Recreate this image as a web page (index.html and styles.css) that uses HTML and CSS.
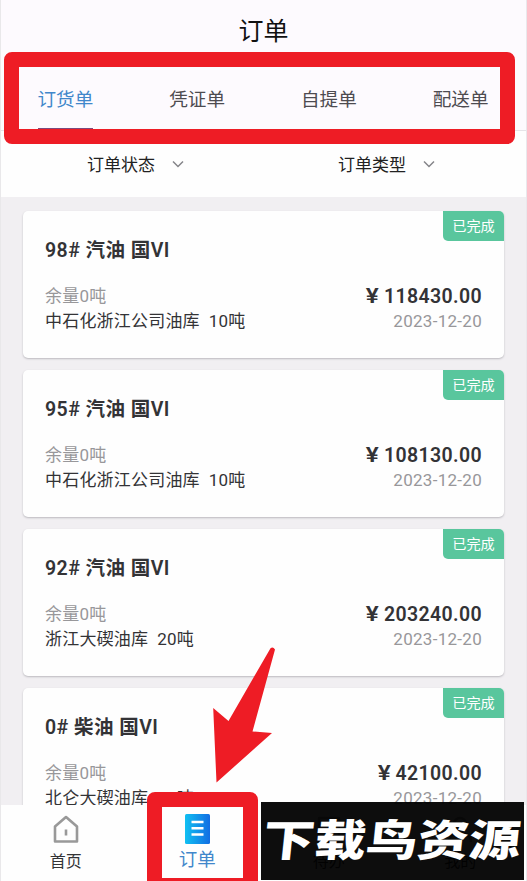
FILE: index.html
```html
<!DOCTYPE html>
<html lang="zh-CN">
<head>
<meta charset="utf-8">
<title>订单</title>
<link rel="stylesheet" href="styles.css">
</head>
<body>
<div class="screen">
  <header class="title">订单</header>
  <nav class="tabs">
    <span class="tab active">订货单</span><span class="tab">凭证单</span><span class="tab">自提单</span><span class="tab">配送单</span>
  </nav>
  <div class="filters">
    <div class="filter">订单状态<svg width="12" height="8" viewBox="0 0 12 8"><path d="M1 1.5 6 6.5 11 1.5"/></svg></div>
    <div class="filter">订单类型<svg width="12" height="8" viewBox="0 0 12 8"><path d="M1 1.5 6 6.5 11 1.5"/></svg></div>
  </div>
  <main class="list">
    <article class="card">
      <span class="badge">已完成</span>
      <h2>98# 汽油 国VI</h2>
      <div class="row"><span class="muted">余量0吨</span><span class="price"><i>¥</i>118430.00</span></div>
      <div class="row"><span>中石化浙江公司油库<b>10吨</b></span><span class="date">2023-12-20</span></div>
    </article>
    <article class="card">
      <span class="badge">已完成</span>
      <h2>95# 汽油 国VI</h2>
      <div class="row"><span class="muted">余量0吨</span><span class="price"><i>¥</i>108130.00</span></div>
      <div class="row"><span>中石化浙江公司油库<b>10吨</b></span><span class="date">2023-12-20</span></div>
    </article>
    <article class="card">
      <span class="badge">已完成</span>
      <h2>92# 汽油 国VI</h2>
      <div class="row"><span class="muted">余量0吨</span><span class="price"><i>¥</i>203240.00</span></div>
      <div class="row"><span>浙江大碶油库<b>20吨</b></span><span class="date">2023-12-20</span></div>
    </article>
    <article class="card">
      <span class="badge">已完成</span>
      <h2>0# 柴油 国VI</h2>
      <div class="row"><span class="muted">余量0吨</span><span class="price"><i>¥</i>42100.00</span></div>
      <div class="row"><span>北仑大碶油库<b>10吨</b></span><span class="date">2023-12-20</span></div>
    </article>
  </main>
  <footer class="bottom">
    <div class="item">
      <svg class="line" width="26" height="29" viewBox="0 0 26 29"><path d="M2 11.5 13 2 24 11.5V26.5H2Z"/><path d="M13 14.5v6"/></svg>
      <span>首页</span>
    </div>
    <div class="item current">
      <svg width="25" height="30" viewBox="0 0 25 30">
        <defs><linearGradient id="g" x1="0" x2="1" y1="0" y2="0"><stop offset="0" stop-color="#10c0f2"/><stop offset="1" stop-color="#126de3"/></linearGradient></defs>
        <rect width="25" height="30" rx="1.5" fill="url(#g)"/>
        <path d="M6.5 8h12M6.5 14.3h12M6.5 20.5h12" stroke="#fff" stroke-width="2.6"/>
      </svg>
      <span>订单</span>
    </div>
    <div class="item">
      <svg class="line" width="26" height="29" viewBox="0 0 26 29"><path d="M3 3H23V26H3ZM8 10h10M8 16h10"/></svg>
      <span>待办</span>
    </div>
    <div class="item">
      <svg class="line" width="26" height="29" viewBox="0 0 26 29"><circle cx="13" cy="9" r="6"/><path d="M2 27q0-9 11-9t11 9"/></svg>
      <span>我的</span>
    </div>
  </footer>
  <div class="frame frame-tabs"></div>
  <div class="frame frame-order"></div>
  <svg class="arrow" width="62" height="136" viewBox="0 0 62 136"><path d="M57.5 1.2Q60 -.8 62 2.5L39.5 84.5 59 86 3.5 135.5 .2 61 15.5 74Z"/></svg>
  <div class="mark"><span>下载鸟资源</span></div>
</div>
</body>
</html>
```
FILE: styles.css
```css
* { box-sizing: border-box; }
body { margin: 0; overflow: hidden; font-family: Roboto, "Noto Sans CJK SC", sans-serif; color: #333336; }
.screen { position: relative; width: 527px; height: 881px; overflow: hidden; background: #f1eff2; display: flex; flex-direction: column; border-left: 1px solid #e9e8ea; border-right: 1px solid #eae8ec; }
.title { flex: none; height: 60px; line-height: 63px; background: #fdfafe; text-align: center; font-size: 25px; color: #111; }
.tabs { flex: none; height: 71px; padding: 8px 37.5px 0 36.5px; display: flex; justify-content: space-between; background: #fdfafe; border-bottom: 1px solid #e6e4e8; }
.tab { height: 63px; line-height: 64px; font-size: 18.6px; color: #4d4b50; }
.tab.active { color: #4187cb; border-bottom: 3px solid #7d4a7e; }
.filters { flex: none; height: 66px; display: flex; background: #fefefe; padding: 0 0 1px 9px; }
.filter { width: 251px; display: flex; justify-content: center; align-items: center; gap: 17px; font-size: 17px; color: #222; }
.filter svg { fill: none; stroke: #858589; stroke-width: 1.5; }
.list { flex: 1; min-height: 0; overflow: hidden; display: flex; flex-direction: column; gap: 12px; padding: 14px 22px 0 22px; }
.card { position: relative; flex: none; height: 147px; padding: 27px 22px 0 22px; background: #fefefe; border-radius: 5px; box-shadow: 0 1px 2px #bbb9be; }
.card h2 { margin: 0 0 19px; font-size: 19.5px; line-height: 26px; font-weight: 600; letter-spacing: .45px; }
.badge { position: absolute; top: 0; right: 0; width: 61px; height: 30px; line-height: 31px; text-align: center; font-size: 14.2px; color: #fff; background: #59c69d; border-radius: 0 5px 0 5px; }
.row { display: flex; justify-content: space-between; height: 25px; line-height: 26px; font-size: 17px; letter-spacing: .2px; }
.row b { font-weight: 400; margin-left: 9px; }
.muted, .date { color: #98979a; }
.date { letter-spacing: .28px; }
.price { font-size: 19.5px; line-height: 28px; font-weight: 600; letter-spacing: .38px; }
.price i { font-style: normal; display: inline-block; transform: scaleX(1.25); margin-right: 6px; }
.bottom { flex: none; height: 76px; display: flex; background: #fefefe; padding-top: 9px; }
.item { flex: none; width: 131.5px; display: flex; flex-direction: column; align-items: center; font-size: 16px; line-height: 24px; padding-right: 2px; }
.item span { margin-top: 6px; }
.line { fill: none; stroke: #999; stroke-width: 2.6; stroke-linejoin: round; margin-top: 1px; }
.item.current { font-size: 18.5px; color: #4187cb; }
.item.current span { margin-top: 4px; }
.frame { position: absolute; border: 15px solid #ee1c25; border-radius: 8px; }
.frame-tabs { left: 3px; top: 52px; width: 511px; height: 92px; }
.frame-order { left: 146px; top: 792px; width: 111px; height: 101px; }
.arrow { position: absolute; left: 212px; top: 647px; fill: #ee1c25; overflow: visible; }
.mark { position: absolute; left: 260px; top: 802px; width: 263px; height: 78px; background: rgba(0, 0, 0, .95); display: flex; align-items: center; justify-content: center; }
.mark span { font-size: 51.5px; line-height: 78px; white-space: nowrap; font-weight: 900; color: #fff; transform: translate(-1px, 1px) skewX(-6deg) scaleY(.84); }
```
